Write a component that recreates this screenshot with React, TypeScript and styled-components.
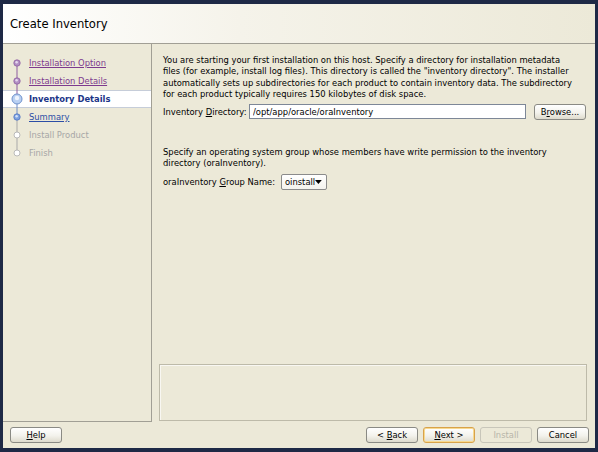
import * as React from "react";
import styled, { createGlobalStyle, css } from "styled-components";

const GlobalStyle = createGlobalStyle`
  html, body {
    margin: 0;
    padding: 0;
    background: #1e2946;
  }
  body {
    font-family: Tahoma, "DejaVu Sans", sans-serif;
    font-size: 8.4px;
    color: #000;
  }
`;

type StepState = "done" | "current" | "next" | "future";

const steps: { label: string; state: StepState }[] = [
  { label: "Installation Option", state: "done" },
  { label: "Installation Details", state: "done" },
  { label: "Inventory Details", state: "current" },
  { label: "Summary", state: "next" },
  { label: "Install Product", state: "future" },
  { label: "Finish", state: "future" },
];

const intro = [
  "You are starting your first installation on this host. Specify a directory for installation metadata",
  'files (for example, install log files). This directory is called the "inventory directory". The installer',
  "automatically sets up subdirectories for each product to contain inventory data. The subdirectory",
  "for each product typically requires 150 kilobytes of disk space.",
];

const lineColor = (from: StepState) => {
  if (from === "done") return "#8d5d9f";
  if (from === "current") return "#6f8cc4";
  return "#a9a9a9";
};

const StepDot = ({ state }: { state: StepState }) => {
  if (state === "current") {
    return (
      <>
        <circle cx="14" cy="9" r="5" fill="#b9d0f2" stroke="#7092cc" strokeWidth="1" />
        <circle cx="14" cy="8" r="2.2" fill="#eef4fd" />
      </>
    );
  }
  if (state === "done") {
    return (
      <>
        <circle cx="14" cy="9" r="3.2" fill="#b291c4" stroke="#8d5d9f" strokeWidth="0.8" />
        <circle cx="13.6" cy="8.2" r="1.2" fill="#e6d8ee" />
      </>
    );
  }
  if (state === "next") {
    return (
      <>
        <circle cx="14" cy="9" r="3.2" fill="#7ea2e0" stroke="#4f74c0" strokeWidth="0.8" />
        <circle cx="13.6" cy="8.2" r="1.2" fill="#d6e3f8" />
      </>
    );
  }
  return <circle cx="14" cy="9" r="3" fill="#ffffff" stroke="#b3b3b3" strokeWidth="0.9" />;
};

const StepIcon = ({ index }: { index: number }) => {
  const state = steps[index].state;
  const prev = index > 0 ? steps[index - 1].state : null;
  const last = index === steps.length - 1;
  return (
    <svg width="26" height="18" viewBox="0 0 26 18">
      {prev && <line x1="14" y1="0" x2="14" y2="9" stroke={lineColor(prev)} strokeWidth="1" />}
      {!last && <line x1="14" y1="9" x2="14" y2="18" stroke={lineColor(state)} strokeWidth="1" />}
      <StepDot state={state} />
    </svg>
  );
};

const Mnemonic = ({ children }: { children: React.ReactNode }) => <U>{children}</U>;

const App = () => {
  return (
    <>
      <GlobalStyle />
      <Screen>
        <Window>
          <Header>
            <Title>Create Inventory</Title>
          </Header>

          <Body>
            <Nav>
              <StepList>
                {steps.map((s, i) => (
                  <StepRow key={s.label} active={s.state === "current"}>
                    <StepIcon index={i} />
                    <StepLabel state={s.state}>{s.label}</StepLabel>
                  </StepRow>
                ))}
              </StepList>
            </Nav>

            <Content>
              <Paragraph>
                {intro.map((line) => (
                  <Line key={line}>{line}</Line>
                ))}
              </Paragraph>

              <FieldRow top={3}>
                <FieldLabel>
                  Inventory <Mnemonic>D</Mnemonic>irectory:
                </FieldLabel>
                <TextInput defaultValue="/opt/app/oracle/oraInventory" />
                <Button>
                  B<Mnemonic>r</Mnemonic>owse...
                </Button>
              </FieldRow>

              <GroupText>
                <Line>Specify an operating system group whose members have write permission to the inventory</Line>
                <Line>directory (oraInventory).</Line>
              </GroupText>

              <FieldRow top={5}>
                <FieldLabel>
                  oraInventory <Mnemonic>G</Mnemonic>roup Name:
                </FieldLabel>
                <Select>
                  <span>oinstall</span>
                  <svg width="7" height="4" viewBox="0 0 7 4">
                    <path d="M0 0 L7 0 L3.5 4 Z" fill="#000" />
                  </svg>
                </Select>
              </FieldRow>

              <Spacer />
              <MessageBox />
            </Content>
          </Body>

          <Footer>
            <Button>
              <Mnemonic>H</Mnemonic>elp
            </Button>
            <ButtonGroup>
              <Button>
                &lt; <Mnemonic>B</Mnemonic>ack
              </Button>
              <Button focused>
                <Mnemonic>N</Mnemonic>ext &gt;
              </Button>
              <Button disabled>Install</Button>
              <Button>Cancel</Button>
            </ButtonGroup>
          </Footer>
        </Window>
      </Screen>
    </>
  );
};

const Screen = styled.div`
  width: 598px;
  height: 452px;
  padding: 4px 3px 4px 3px;
  box-sizing: border-box;
  background: #1e2946;
  overflow: hidden;
`;

const Window = styled.div`
  width: 592px;
  height: 444px;
  display: flex;
  flex-direction: column;
  background: #ece9d8;
  overflow: hidden;
`;

const Header = styled.div`
  height: 39px;
  flex: none;
  display: flex;
  align-items: center;
  padding-left: 7px;
  background: linear-gradient(to right, #ffffff 0%, #f5f3ea 40%, #ece9d8 100%);
  border-bottom: 1px solid #a19f95;
`;

const Title = styled.h1`
  margin: 0;
  font-family: Tahoma, "DejaVu Sans", sans-serif;
  font-weight: normal;
  font-size: 11.6px;
  color: #000;
`;

const Body = styled.div`
  flex: 1;
  display: flex;
  min-height: 0;
`;

const Nav = styled.div`
  width: 149px;
  flex: none;
  border-right: 1px solid #a19f95;
  border-bottom: 1px solid #a19f95;
  padding-top: 10px;
  box-sizing: border-box;
`;

const StepList = styled.div`
  display: flex;
  flex-direction: column;
`;

const StepRow = styled.div<{ active?: boolean }>`
  height: 18px;
  display: flex;
  align-items: center;
  box-sizing: border-box;
  ${(p) =>
    p.active &&
    css`
      background: #ffffff;
      box-shadow: inset 0 1px 0 #c6cdd9, inset 0 -1px 0 #c6cdd9;
    `}

  svg {
    flex: none;
    display: block;
  }
`;

const StepLabel = styled.span<{ state: StepState }>`
  white-space: nowrap;
  ${(p) => {
    switch (p.state) {
      case "done":
        return css`
          color: #7d3a8e;
          text-decoration: underline;
        `;
      case "current":
        return css`
          color: #1b3587;
          font-weight: bold;
        `;
      case "next":
        return css`
          color: #2c4ea6;
          text-decoration: underline;
        `;
      default:
        return css`
          color: #a6a6a6;
        `;
    }
  }}
`;

const Content = styled.div`
  flex: 1;
  min-width: 0;
  display: flex;
  flex-direction: column;
  padding: 11px 8px 1px 7px;
  box-sizing: border-box;
`;

const Paragraph = styled.div`
  margin: 0 0 0 4px;
  line-height: 11.4px;
`;

const Line = styled.div`
  white-space: nowrap;
`;

const FieldRow = styled.div<{ top: number }>`
  display: flex;
  align-items: center;
  margin: ${(p) => p.top}px 0 0 4px;
`;

const FieldLabel = styled.span`
  white-space: nowrap;
  width: 86px;
  flex: none;
`;

const TextInput = styled.input`
  width: 277px;
  height: 15px;
  box-sizing: border-box;
  border: 1px solid #7d8797;
  background: #fff;
  font-family: Tahoma, "DejaVu Sans", sans-serif;
  font-size: 8.4px;
  padding: 0 3px;
  margin-right: 8px;
  outline: none;
`;

const GroupText = styled.div`
  margin: 27px 0 0 4px;
  line-height: 11.4px;
`;

const Select = styled.div`
  height: 16px;
  width: 46px;
  box-sizing: border-box;
  margin-left: 32px;
  border: 1px solid #8b8b8b;
  border-radius: 2px;
  background: linear-gradient(#ffffff, #f4f3ee);
  display: flex;
  align-items: center;
  justify-content: space-between;
  padding: 0 4px 0 3px;
`;

const Spacer = styled.div`
  flex: 1;
`;

const MessageBox = styled.div`
  height: 57px;
  border: 1px solid #bdbaa9;
  box-shadow: inset 1px 1px 0 #f8f7f2;
  box-sizing: border-box;
`;

const Footer = styled.div`
  height: 26px;
  flex: none;
  display: flex;
  align-items: center;
  justify-content: space-between;
  padding: 0 6px 0 7px;
  box-sizing: border-box;
`;

const ButtonGroup = styled.div`
  display: flex;
  gap: 5px;
`;

const Button = styled.button<{ focused?: boolean }>`
  width: 52px;
  height: 16px;
  flex: none;
  box-sizing: border-box;
  padding: 0;
  border: 1px solid #8a8a84;
  border-radius: 3px;
  background: linear-gradient(#ffffff 0%, #f3f2ec 55%, #dedbcd 100%);
  font-family: Tahoma, "DejaVu Sans", sans-serif;
  font-size: 8.4px;
  color: #000;
  white-space: nowrap;
  ${(p) =>
    p.focused &&
    css`
      border-color: #d8a24a;
      box-shadow: inset 0 0 0 1px #f7d98f;
    `}
  &:disabled {
    color: #b7b5a9;
    border-color: #c8c6ba;
    background: #ece9d8;
  }
`;

const U = styled.span`
  text-decoration: underline;
`;

export default App;
